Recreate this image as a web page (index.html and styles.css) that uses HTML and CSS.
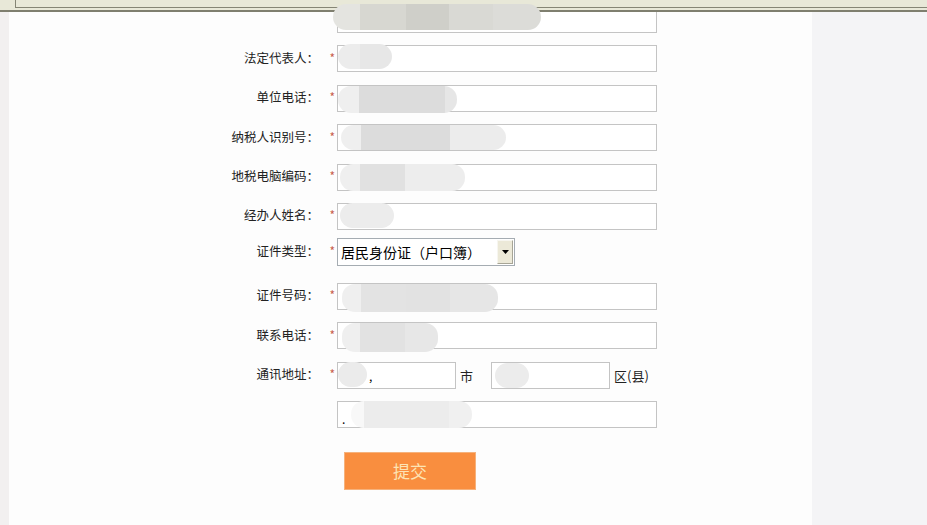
FILE: index.html
```html
<!DOCTYPE html>
<html lang="zh-CN">
<head>
  <meta charset="UTF-8" />
  <title>登记信息</title>
  <link rel="stylesheet" href="styles.css">
</head>
<body>
  <div class="frame">
    <div class="frame-inner"></div>
  </div>

  <div class="page">
    <div class="edge"></div>

    <div class="main">
      <form class="form">
        <div class="row">
          <span class="label"></span>
          <span class="star"></span>
          <div class="field"><span class="blob b0"></span></div>
        </div>

        <div class="row">
          <span class="label">法定代表人：</span>
          <span class="star">*</span>
          <div class="field"><span class="blob b1"></span></div>
        </div>

        <div class="row">
          <span class="label">单位电话：</span>
          <span class="star">*</span>
          <div class="field"><span class="blob b2"></span></div>
        </div>

        <div class="row">
          <span class="label">纳税人识别号：</span>
          <span class="star">*</span>
          <div class="field"><span class="blob b3"></span></div>
        </div>

        <div class="row">
          <span class="label">地税电脑编码：</span>
          <span class="star">*</span>
          <div class="field"><span class="blob b4"></span></div>
        </div>

        <div class="row">
          <span class="label">经办人姓名：</span>
          <span class="star">*</span>
          <div class="field"><span class="blob b5"></span></div>
        </div>

        <div class="row row-select">
          <span class="label">证件类型：</span>
          <span class="star">*</span>
          <div class="select">
            <span class="select-text">居民身份证（户口簿）</span>
            <span class="select-arrow">
              <svg width="7" height="4" viewBox="0 0 7 4"><path d="M0 0H7L3.5 4Z" fill="#000"/></svg>
            </span>
          </div>
        </div>

        <div class="row">
          <span class="label">证件号码：</span>
          <span class="star">*</span>
          <div class="field"><span class="blob b7"></span></div>
        </div>

        <div class="row">
          <span class="label">联系电话：</span>
          <span class="star">*</span>
          <div class="field"><span class="blob b8"></span></div>
        </div>

        <div class="row">
          <span class="label">通讯地址：</span>
          <span class="star">*</span>
          <div class="field short"><span class="blob b9"></span><span class="mark">,</span></div>
          <span class="unit">市</span>
          <div class="field short"><span class="blob b9b"></span></div>
          <span class="unit last">区(县)</span>
        </div>

        <div class="row">
          <span class="label"></span>
          <span class="star"></span>
          <div class="field"><span class="mark dot">.</span><span class="blob b10"></span></div>
        </div>

        <button type="button" class="submit">提交</button>
      </form>
    </div>

    <div class="side"></div>
  </div>
</body>
</html>
```

FILE: styles.css
```css
html,
body {
  margin: 0;
  height: 100%;
  overflow: hidden;
}
body {
  font-family: "Noto Sans CJK SC", "Liberation Sans", sans-serif;
  font-size: 12px;
  color: #222;
  background: #f4f4f6;
}

/* top window frame */
.frame {
  position: relative;
  z-index: 1;
  height: 10px;
  background: #e8e8d8;
  border-bottom: 2px solid #7f7f6f;
}
.frame-inner {
  height: 7px;
  margin-left: 15px;
  border-left: 1px solid #858575;
  border-bottom: 1px solid #858575;
}

.page {
  display: flex;
  height: calc(100% - 12px);
}
.edge {
  width: 9px;
  background: #f2f0f0;
}
.main {
  width: 803px;
  background: #fdfdfd;
}
.side {
  flex: 1;
  background: #f4f4f6;
}

.form {
  display: flex;
  flex-direction: column;
  gap: 12.4px;
  margin-top: -6px;
}
.row {
  display: flex;
  align-items: center;
  height: 27px;
}
.label {
  width: 310px;
  text-align: right;
  white-space: nowrap;
  font-size: 12.5px;
  margin-top: -3px;
}
.star {
  width: 16px;
  padding-right: 2px;
  text-align: right;
  color: #c8604e;
  margin-top: -3px;
}

.field {
  display: flex;
  align-items: center;
  box-sizing: border-box;
  width: 320px;
  height: 27px;
  border: 1px solid #c4c4c4;
  background: #fff;
}
.field.short {
  width: 119px;
}
.unit {
  margin-left: 4px;
  width: 31px;
  font-size: 13px;
}
.unit.last {
  width: auto;
}
.mark {
  color: #000;
  font-size: 12px;
  margin-left: 2px;
}
.mark.dot {
  margin-left: 4px;
  margin-top: 8px;
}

/* blurred values */
.blob {
  position: relative;
  z-index: 2;
  display: block;
  height: 25px;
  border-radius: 13px;
  filter: blur(0.6px);
}
.b0 {
  width: 208px;
  height: 26px;
  margin: -6px 0 0 -5px;
  background: linear-gradient(90deg, #e4e4e0 13%, #d7d7d1 13% 35%, #cfcfc9 35% 56%, #d9d9d4 56% 77%, #dcdcd8 77%);
}
.b1 {
  width: 54px;
  margin: -4px 0 0 0;
  background: linear-gradient(90deg, #ececec 40%, #e7e7e7 40%);
}
.b2 {
  width: 119px;
  height: 27px;
  margin-top: 2px;
  background: linear-gradient(90deg, #efefef 18%, #dcdcdc 18% 90%, #e6e6e6 90%);
}
.b3 {
  width: 165px;
  margin-left: 3px;
  background: linear-gradient(90deg, #efefef 12%, #dcdcdc 12% 66%, #ececec 66%);
}
.b4 {
  width: 125px;
  height: 27px;
  margin-left: 2px;
  background: linear-gradient(90deg, #efefef 16%, #e1e1e1 16% 52%, #ededed 52%);
}
.b5 {
  width: 54px;
  margin: -2px 0 0 2px;
  background: #ececec;
}
.b7 {
  width: 156px;
  height: 28px;
  margin: 3px 0 0 4px;
  background: linear-gradient(90deg, #efefef 12%, #e3e3e3 12% 41%, #e2e2e2 41% 69%, #e6e6e6 69%);
}
.b8 {
  width: 96px;
  height: 29px;
  margin: 4px 0 0 4px;
  background: linear-gradient(90deg, #efefef 19%, #e2e2e2 19% 66%, #e7e7e7 66%);
}
.b9 {
  width: 29px;
  margin-top: -2px;
  background: #ebebeb;
}
.b9b {
  width: 34px;
  margin-left: 3px;
  background: #ececec;
}
.b10 {
  width: 121px;
  height: 27px;
  margin-left: 6px;
  background: linear-gradient(90deg, #f8f8f8 11%, #ececec 11% 81%, #f0f0f0 81%);
}

/* select */
.row-select {
  margin-top: -4px;
  margin-bottom: 4px;
  height: 28px;
}
.select {
  display: flex;
  align-items: center;
  justify-content: space-between;
  box-sizing: border-box;
  width: 178px;
  height: 28px;
  border: 1px solid #a5acb2;
  background: #fff;
  padding: 1px;
}
.select-text {
  font-size: 14px;
  color: #000;
  padding-left: 2px;
}
.select-arrow {
  display: flex;
  align-items: center;
  justify-content: center;
  width: 16px;
  height: 100%;
  box-sizing: border-box;
  background: #ece9d8;
  border: 1px solid #f7f6f0;
  border-right-color: #a7a596;
  border-bottom-color: #a7a596;
}

.submit {
  align-self: flex-start;
  width: 132px;
  height: 38px;
  margin: 11.6px 0 0 335px;
  border: 1px solid #f6b27c;
  background: #f98e3f;
  color: #fde4b4;
  font-family: "Noto Sans CJK SC", sans-serif;
  font-size: 17px;
  padding: 0;
}
```
